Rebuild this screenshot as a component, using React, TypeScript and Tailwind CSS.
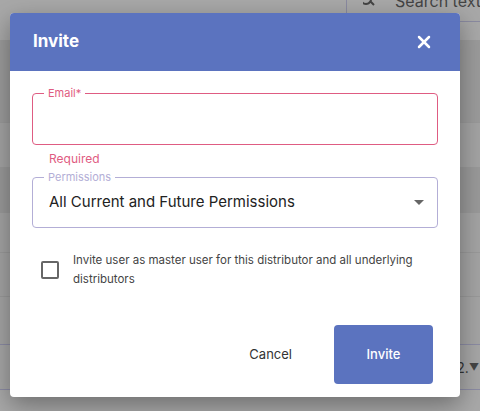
import { X } from "lucide-react";

function Backdrop() {
  return (
    <div className="flex h-full w-full flex-col bg-[#a4a4a4]">
      <div className="flex h-[40px] shrink-0 justify-end bg-[#a8a8a8]">
        <div className="flex h-[22px] w-[134px] items-start gap-[18px] overflow-hidden border-b border-l border-[#8a8aa0] pl-[16px]">
          <svg width="14" height="8" viewBox="0 0 14 8" className="shrink-0">
            <path d="M3 -6 a5 5 0 1 0 0.01 0 M7 1 L11 5" stroke="#444" strokeWidth="2" fill="none" />
          </svg>
          <span className="-mt-[11px] whitespace-nowrap text-[16px] text-[#444]">Search text</span>
        </div>
      </div>
      <div className="h-[83px] shrink-0 border-b border-[#999] bg-[#9b9b9b]" />
      <div className="h-[44px] shrink-0 bg-[#a3a3a3]" />
      <div className="h-[46px] shrink-0 bg-[#999]" />
      <div className="h-[40px] shrink-0 border-b border-[#999] bg-[#a3a3a3]" />
      <div className="h-[44px] shrink-0 border-b border-[#999] bg-[#a3a3a3]" />
      <div className="h-[48px] shrink-0 border-b border-[#8b8ba3] bg-[#a4a4a4]" />
      <div className="flex h-[45px] shrink-0 items-center justify-end border-b border-[#8b8ba3] bg-[#a6a6a6] pr-[1px]">
        <span className="text-[14px] text-[#333]">2.</span>
        <span className="text-[10px] text-[#444]">▼</span>
      </div>
      <div className="flex-1 bg-[#a8a8a8]" />
    </div>
  );
}

export default function App() {
  return (
    <div
      className="relative h-[411px] w-[480px] overflow-hidden"
      style={{ fontFamily: "Inter, 'Liberation Sans', sans-serif" }}
    >
      <Backdrop />

      {/* Invite dialog */}
      <div className="absolute left-[10px] top-[13px] flex h-[384px] w-[450px] flex-col overflow-hidden rounded-[4px] bg-white shadow-[0_8px_24px_rgba(0,0,0,0.35)]">
        <div className="flex h-[58px] shrink-0 items-center justify-between bg-[#5b73bf] pl-[23px] pr-[26px]">
          <span className="text-[17px] font-bold text-white">Invite</span>
          <X className="h-[20px] w-[20px] text-white" strokeWidth={3} />
        </div>

        <div className="flex flex-1 flex-col px-[22px] pt-[22px]">
          {/* Email */}
          <div className="relative h-[52px] rounded-[4px] border border-[#df5c82]">
            <span className="absolute -top-[8px] left-[11px] bg-white px-[4px] text-[11px] leading-[14px] text-[#df5c82]">
              Email*
            </span>
          </div>
          <div className="mt-[7px] pl-[17px] text-[12px] leading-[14px] text-[#df5c82]">Required</div>

          {/* Permissions */}
          <div className="relative mt-[11px] flex h-[51px] items-center justify-between rounded-[4px] border border-[#b3aed6] pl-[16px] pr-[13px]">
            <span className="absolute -top-[8px] left-[11px] bg-white px-[4px] text-[11px] leading-[14px] text-[#b3aed6]">
              Permissions
            </span>
            <span className="text-[15px] text-[#222]">All Current and Future Permissions</span>
            <svg width="10" height="5" viewBox="0 0 10 5">
              <path d="M0 0 L10 0 L5 5 Z" fill="#666" />
            </svg>
          </div>

          {/* Master user */}
          <div className="mt-[23px] flex items-start gap-[14px] pl-[9px]">
            <div className="mt-[10px] h-[18px] w-[18px] shrink-0 rounded-[2px] border-2 border-[#666]" />
            <p className="text-[11.5px] leading-[19px] text-[#444]">
              Invite user as master user for this distributor and all underlying distributors
            </p>
          </div>

          <div className="mt-auto flex items-center justify-end gap-[42px] pb-[13px] pr-[5px]">
            <button className="text-[13px] text-[#333]">Cancel</button>
            <button className="h-[59px] w-[99px] rounded-[4px] bg-[#5b73bf] text-[13px] font-medium text-white">
              Invite
            </button>
          </div>
        </div>
      </div>
    </div>
  );
}
